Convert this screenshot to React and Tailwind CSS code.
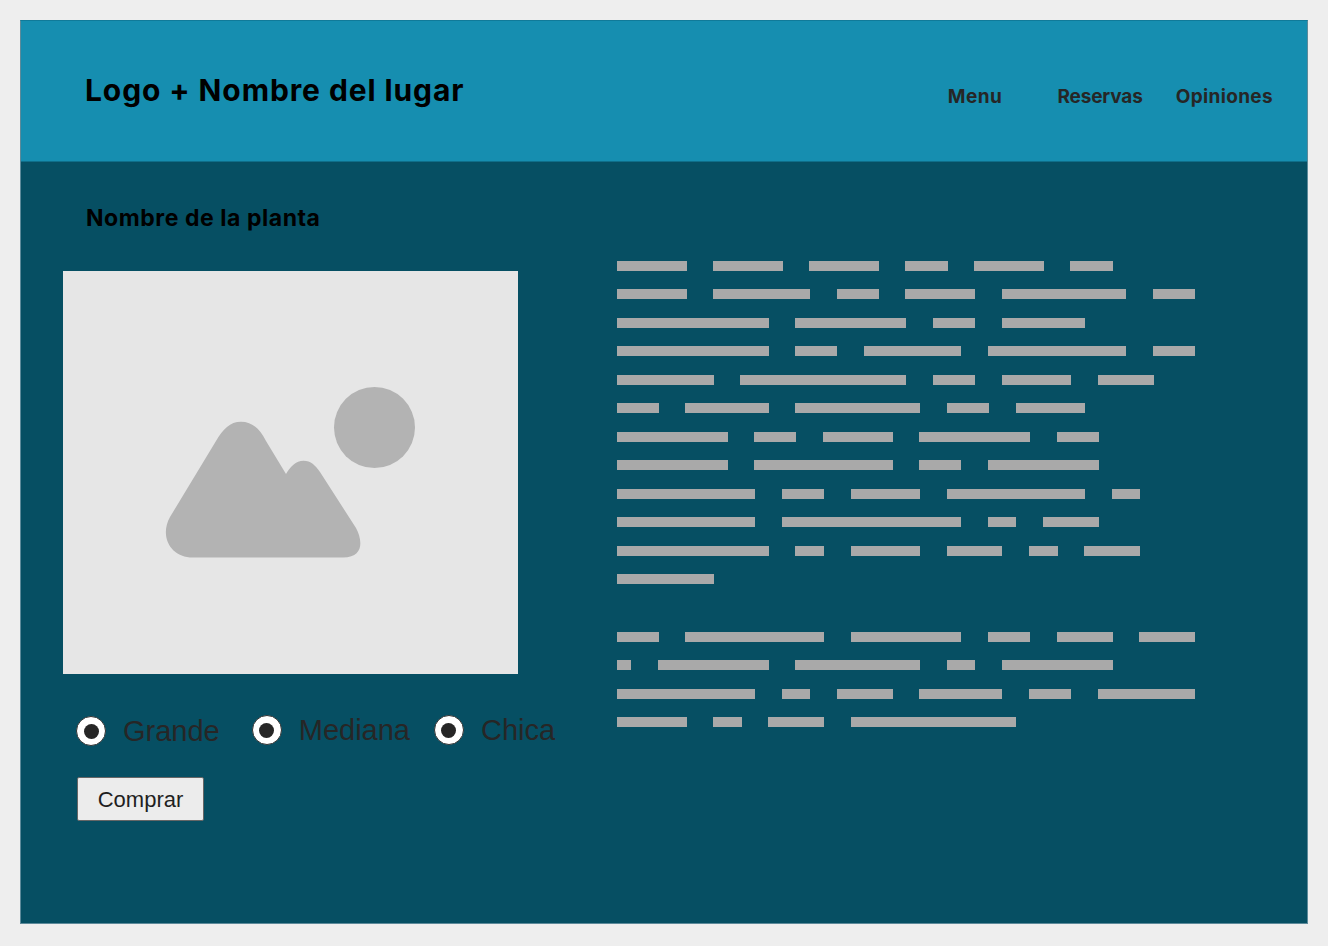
const headingFont = "font-['Inter','Liberation_Sans',sans-serif]";

// placeholder text lines, each pair is [left, right] of a bar as read from the mock
const firstBlock = [
  [[617, 687], [713, 783], [809, 879], [905, 948], [974, 1044], [1070, 1113]],
  [[617, 687], [713, 810], [837, 879], [905, 975], [1002, 1126], [1153, 1195]],
  [[617, 769], [795, 906], [933, 975], [1002, 1085]],
  [[617, 769], [795, 837], [864, 961], [988, 1126], [1153, 1195]],
  [[617, 714], [740, 906], [933, 975], [1002, 1071], [1098, 1154]],
  [[617, 659], [685, 769], [795, 920], [947, 989], [1016, 1085]],
  [[617, 728], [754, 796], [823, 893], [919, 1030], [1057, 1099]],
  [[617, 728], [754, 893], [919, 961], [988, 1099]],
  [[617, 755], [782, 824], [851, 920], [947, 1085], [1112, 1140]],
  [[617, 755], [782, 961], [988, 1016], [1043, 1099]],
  [[617, 769], [795, 824], [851, 920], [947, 1002], [1029, 1058], [1084, 1140]],
  [[617, 714]],
];

const secondBlock = [
  [[617, 659], [685, 824], [851, 961], [988, 1030], [1057, 1113], [1139, 1195]],
  [[617, 631], [658, 769], [795, 920], [947, 975], [1002, 1113]],
  [[617, 755], [782, 810], [837, 893], [919, 1002], [1029, 1071], [1098, 1195]],
  [[617, 687], [713, 742], [768, 824], [851, 1016]],
];

function TextBlock({ lines }) {
  return (
    <div className="flex flex-col gap-[18.5px]">
      {lines.map((line, i) => (
        <div key={i} className="flex">
          {line.map(([left, right], j) => (
            <div
              key={j}
              className="h-[10px] bg-[#a9a9a9]"
              style={{ width: right - left, marginLeft: j === 0 ? 0 : left - line[j - 1][1] }}
            />
          ))}
        </div>
      ))}
    </div>
  );
}

function Radio({ label }) {
  return (
    <label className="flex items-center gap-[17px]">
      <span className="flex h-[30px] w-[30px] items-center justify-center rounded-full border border-[#333333] bg-white">
        <span className="h-[15px] w-[15px] rounded-full bg-[#262626]" />
      </span>
      <span className="font-['Liberation_Sans',sans-serif] text-[29px] leading-[34px] text-[#262626]">
        {label}
      </span>
    </label>
  );
}

function ImagePlaceholder() {
  return (
    <div className="flex h-[403px] w-[455px] items-center justify-center bg-[#e6e6e6]">
      <svg width="250" height="172" viewBox="0 0 250 172" fill="#b3b3b3" className="-translate-x-[1px]">
        <path d="M28 170.5C6 170.5-6 150 5 130L51 54C58 42 65 34.7 76 34.7C87 34.7 95 42 101 54L121 87C125 80 131 73.7 138.5 73.7C146 73.7 150 78 155 85L191 141C197 152 200 170.5 178 170.5Z" />
        <circle cx="209.5" cy="40.5" r="40.5" />
      </svg>
    </div>
  );
}

export default function App() {
  return (
    <div className="min-h-[946px] bg-[#eeeeee] p-[20px]">
      <div className="h-[904px] w-[1288px] border border-[#5d8a9a] border-t-[#107a99] bg-[#064f63]">
        <header className={`flex h-[141px] items-start justify-between border-b border-[#0f6f8a] bg-[#168eb0] ${headingFont}`}>
          <h1 className="ml-[64px] mt-[50px] text-[30px] font-bold leading-[38px] tracking-[0.9px] text-black">
            Logo + Nombre del lugar
          </h1>
          <nav className="mr-[34px] mt-[64px] flex text-[19px] font-bold leading-[24px] text-[#262626]">
            <a className="mr-[55px] tracking-[0.5px]">Menu</a>
            <a className="mr-[33px] tracking-[-0.15px]">Reservas</a>
            <a className="tracking-[0.35px]">Opiniones</a>
          </nav>
        </header>

        <main className="flex">
          <section className="w-[596px] pl-[42px]">
            <h2 className={`ml-[23px] mt-[42px] text-[23px] font-bold leading-[28px] tracking-[0.55px] text-black ${headingFont}`}>
              Nombre de la planta
            </h2>
            <div className="mt-[39px]">
              <ImagePlaceholder />
            </div>
            <div className="ml-[13px] mt-[39px] flex items-start">
              <div className="mr-[32px] mt-[1px]"><Radio label="Grande" /></div>
              <div className="mr-[24px]"><Radio label="Mediana" /></div>
              <Radio label="Chica" />
            </div>
            <button className="ml-[14px] mt-[29px] h-[44px] w-[127px] rounded-[2px] border border-[#666666] bg-[#ececec] pt-[1px] font-['Liberation_Sans',sans-serif] text-[22px] leading-[40px] text-[#1f1f1f]">
              Comprar
            </button>
          </section>

          <section className="flex flex-col gap-[47.3px] pt-[98.9px]">
            <TextBlock lines={firstBlock} />
            <TextBlock lines={secondBlock} />
          </section>
        </main>
      </div>
    </div>
  );
}
